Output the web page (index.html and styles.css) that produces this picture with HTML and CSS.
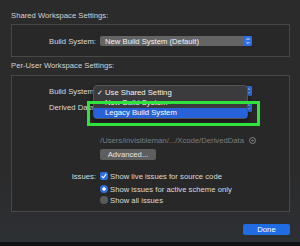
FILE: index.html
```html
<!DOCTYPE html>
<html lang="en">
<head>
  <meta charset="UTF-8">
  <title>Workspace Settings</title>
  <link rel="stylesheet" href="styles.css">
</head>
<body>

  <div class="sheet">
    <div class="group-title first">Shared Workspace Settings:</div>
    <div class="group shared">
      <div class="row">
        <span class="label">Build System:</span>
        <div class="popup">
          <span class="popup-text">New Build System (Default)</span>
          <span class="stepper">
            <svg width="8" height="10" viewBox="0 0 8 10"><path d="M2.4 4 L4 2.4 L5.6 4 M2.4 6 L4 7.6 L5.6 6" fill="none" stroke="#fff" stroke-width="0.9"/></svg>
          </span>
        </div>
      </div>
    </div>

    <div class="group-title">Per-User Workspace Settings:</div>
    <div class="group per-user">
      <div class="row">
        <span class="label">Build System:</span>
        <div class="popup">
          <span class="popup-text"></span>
          <span class="stepper">
            <svg width="8" height="10" viewBox="0 0 8 10"><path d="M2.4 4 L4 2.4 L5.6 4 M2.4 6 L4 7.6 L5.6 6" fill="none" stroke="#fff" stroke-width="0.9"/></svg>
          </span>
        </div>
      </div>
      <div class="row derived">
        <span class="label">Derived Data:</span>
        <div class="popup">
          <span class="popup-text"></span>
          <span class="stepper">
            <svg width="8" height="10" viewBox="0 0 8 10"><path d="M2.4 4 L4 2.4 L5.6 4 M2.4 6 L4 7.6 L5.6 6" fill="none" stroke="#fff" stroke-width="0.9"/></svg>
          </span>
        </div>
      </div>
      <div class="row path">
        <span class="label"></span>
        <span class="path-text">/Users/invisibleman/.../Xcode/DerivedData</span>
        <svg class="reveal" width="7" height="7" viewBox="0 0 7 7"><circle cx="3.5" cy="3.5" r="3" fill="none" stroke="#8a8a8a" stroke-width="0.9"/><path d="M2.2 3.5 H4.6 M3.6 2.5 L4.6 3.5 L3.6 4.5" fill="none" stroke="#8a8a8a" stroke-width="0.8"/></svg>
      </div>
      <div class="row advanced">
        <span class="label"></span>
        <button class="push">Advanced...</button>
      </div>
      <div class="row issue first-issue">
        <span class="label">Issues:</span>
        <span class="check">
          <svg width="8" height="8" viewBox="0 0 8 8"><path d="M1.8 4.2 L3.3 5.8 L6.3 1.9" fill="none" stroke="#fff" stroke-width="1.1"/></svg>
        </span>
        <span class="option">Show live issues for source code</span>
      </div>
      <div class="row issue second-issue">
        <span class="label"></span>
        <span class="radio on"></span>
        <span class="option">Show issues for active scheme only</span>
      </div>
      <div class="row issue third-issue">
        <span class="label"></span>
        <span class="radio"></span>
        <span class="option">Show all issues</span>
      </div>

      <div class="menu">
        <div class="menu-item"><span class="tick">✓</span>Use Shared Setting</div>
        <div class="menu-item">New Build System</div>
        <div class="menu-item selected">Legacy Build System</div>
      </div>
      <div class="callout"></div>
    </div>

    <div class="footer">
      <button class="done">Done</button>
    </div>
  </div>
  <div class="bottom-edge"></div>

</body>
</html>
```

FILE: styles.css
```css
body {
  margin: 0;
  width: 300px;
  height: 246px;
  overflow: hidden;
  background-color: #2b2b2b;
  color: #dcdcdc;
  font-family: "Liberation Sans", Arial, sans-serif;
  font-size: 7.7px;
}

.sheet {
  height: 242px;
  box-sizing: border-box;
  padding: 11px 10px 0 11px;
  background: linear-gradient(180deg, #2b2b2b 70%, #2d3034 100%);
}

.group-title {
  height: 10px;
  line-height: 10px;
  margin: 4px 0 4px 0;
  color: #d4d4d4;
}

.group-title.first {
  margin: 0 0 3px 0;
}

.group {
  position: relative;
  border: 1px solid #474747;
  background-color: #282828;
}

.shared {
  height: 33px;
  box-sizing: border-box;
  padding-top: 11px;
}

.per-user {
  height: 137px;
  box-sizing: border-box;
  padding-top: 10px;
}

.row {
  display: flex;
  align-items: center;
  height: 10px;
}

.label {
  width: 84px;
  margin-right: 4px;
  text-align: right;
  flex: none;
}

.popup {
  display: flex;
  align-items: center;
  width: 152px;
  height: 10px;
  border-radius: 2px;
  background-color: #646464;
  color: #f2f2f2;
  overflow: hidden;
}

.popup-text {
  flex: 1;
  padding-left: 5px;
}

.stepper {
  width: 8px;
  height: 10px;
  background-color: #2d6fe2;
  display: flex;
}

.derived {
  margin-top: 6px;
}

.path {
  margin-top: 23px;
}

.path-text {
  color: #7c7c7c;
}

.reveal {
  margin-left: 5px;
}

.advanced {
  margin-top: 4px;
  height: 11px;
}

.push {
  width: 56px;
  height: 11px;
  padding: 0;
  border: none;
  border-radius: 2px;
  background-color: #5e5e5e;
  color: #e4e4e4;
  font-family: inherit;
  font-size: 7.7px;
}

.first-issue {
  margin-top: 11px;
}

.second-issue {
  margin-top: 3px;
}

.third-issue {
  margin-top: 1px;
}

.check {
  width: 8px;
  height: 8px;
  border-radius: 2px;
  background-color: #2d6fe2;
  display: flex;
  margin-right: 2px;
}

.radio {
  width: 8px;
  height: 8px;
  border-radius: 50%;
  background-color: #5a5a5a;
  margin-right: 2px;
  box-sizing: border-box;
}

.radio.on {
  background-color: #2d6fe2;
  border: 2.5px solid #2d6fe2;
  background-clip: padding-box;
  box-shadow: inset 0 0 0 4px #fff;
}

.menu {
  position: absolute;
  top: 9px;
  left: 81px;
  width: 155px;
  height: 34px;
  box-sizing: border-box;
  padding-top: 2px;
  border: 1px solid #565656;
  border-radius: 4px;
  background-color: #3b3b3d;
  box-shadow: 0 2px 5px rgba(0, 0, 0, 0.6);
  color: #f4f4f4;
}

.menu-item {
  height: 10px;
  line-height: 10px;
  padding-left: 11px;
  position: relative;
}

.tick {
  position: absolute;
  left: 3px;
  font-family: "DejaVu Sans", sans-serif;
  font-size: 7px;
}

.menu-item.selected {
  background-color: #2762d9;
  color: #fff;
}

.callout {
  position: absolute;
  top: 25px;
  left: 75px;
  width: 173px;
  height: 25px;
  box-sizing: border-box;
  border: 3px solid #2fe33c;
}

.footer {
  display: flex;
  justify-content: flex-end;
  margin-top: 12px;
}

.done {
  width: 47px;
  height: 11px;
  padding: 0;
  border: none;
  border-radius: 2px;
  background-color: #1f6ce3;
  color: #fff;
  font-family: inherit;
  font-size: 7.7px;
}

.bottom-edge {
  height: 4px;
  background-color: #111;
}
```
